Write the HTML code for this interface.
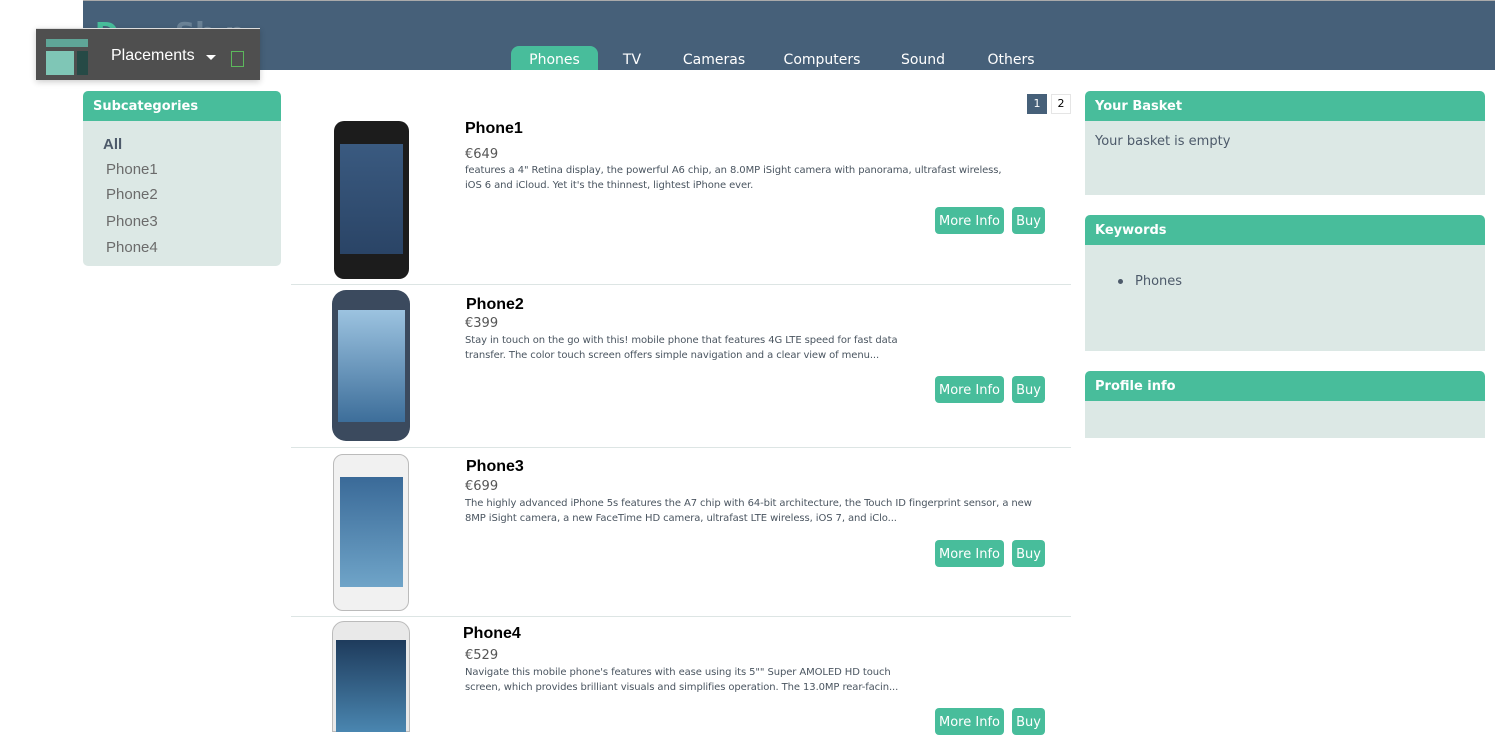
<!DOCTYPE html>
<html><head><meta charset="utf-8">
<style>
*{margin:0;padding:0;box-sizing:border-box}
body{width:1495px;height:732px;overflow:hidden;background:#fff;font-family:"DejaVu Sans","Liberation Sans",sans-serif;position:relative}
.a{position:absolute}
.hdr{left:83px;top:1px;width:1412px;height:69px;background:#466079}
.topline{left:83px;top:0;width:1412px;height:1px;background:#aaa}
.tab{top:46px;height:24px;color:#fff;font-size:14px;line-height:28px;text-align:center}
.tab.on{background:#48bd9b;border-radius:8px 8px 0 0}
.ph{background:#48bd9b;color:#fff;font-weight:bold;font-size:13px;padding-left:10px;line-height:32px;border-radius:5px 5px 0 0}
.pb{background:#dce8e5}
.sub{font-family:"Liberation Sans",sans-serif;font-size:15px;color:#6b6b6b}
.title{font-family:"Liberation Sans",sans-serif;font-weight:bold;font-size:16px;color:#000}
.price{font-size:13px;color:#555}
.desc{font-size:10px;color:#4a5560;line-height:15px;letter-spacing:-0.1px}
.btn{background:#48bd9b;color:#fff;font-size:13px;text-align:center;line-height:29px;border-radius:4px;height:27px}
.sep{left:291px;width:780px;height:1px;background:#dde5e4}
</style></head><body>
<div class="a topline"></div>
<div class="a hdr"></div>
<div class="a" style="left:95px;top:16px;color:#48bd9b;font-size:28px;font-weight:bold">D</div>
<div class="a" style="left:175px;top:16px;color:#6a8296;font-size:28px;font-weight:bold">Sh p</div>
<div class="a tab on" style="left:511px;width:87px">Phones</div>
<div class="a tab" style="left:612px;width:40px">TV</div>
<div class="a tab" style="left:675px;width:78px">Cameras</div>
<div class="a tab" style="left:778px;width:88px">Computers</div>
<div class="a tab" style="left:893px;width:60px">Sound</div>
<div class="a tab" style="left:980px;width:62px">Others</div>

<div class="a" style="left:36px;top:28px;width:224px;height:52px;background:#4f4f4f;border-top:1px solid #ddd;box-shadow:0 2px 6px rgba(0,0,0,.2)"></div>
<div class="a" style="left:46px;top:39px;width:42px;height:8px;background:#5fa597"></div>
<div class="a" style="left:46px;top:51px;width:28px;height:24px;background:#7fc6b6"></div>
<div class="a" style="left:77px;top:51px;width:11px;height:24px;background:#264a46"></div>
<div class="a" style="left:111px;top:47px;color:#fff;font-family:'Liberation Sans',sans-serif;font-size:16px">Placements</div>
<div class="a" style="left:206px;top:55px;width:0;height:0;border-left:5px solid transparent;border-right:5px solid transparent;border-top:5px solid #fff"></div>
<div class="a" style="left:231px;top:51px;width:13px;height:16px;border:1px solid #5cb85c"></div>

<div class="a ph" style="left:83px;top:91px;width:198px;height:30px">Subcategories</div>
<div class="a pb" style="left:83px;top:121px;width:198px;height:145px;border-radius:0 0 5px 5px"></div>
<div class="a sub" style="left:103px;top:136px;font-weight:bold;color:#4d5a6a">All</div>
<div class="a sub" style="left:106px;top:161px">Phone1</div>
<div class="a sub" style="left:106px;top:186px">Phone2</div>
<div class="a sub" style="left:106px;top:213px">Phone3</div>
<div class="a sub" style="left:106px;top:239px">Phone4</div>

<div class="a" style="left:1027px;top:94px;width:20px;height:20px;background:#466079;color:#fff;font-size:11px;text-align:center;line-height:20px">1</div>
<div class="a" style="left:1051px;top:94px;width:20px;height:20px;border:1px solid #e5e5e5;color:#000;font-size:11px;text-align:center;line-height:18px">2</div>

<div class="a" style="left:334px;top:121px;width:75px;height:158px;background:#1c1c1c;border-radius:10px"></div>
<div class="a" style="left:340px;top:144px;width:63px;height:110px;background:linear-gradient(#3a5a80,#2a4466)"></div>
<div class="a" style="left:332px;top:290px;width:78px;height:151px;background:#3b4a5e;border-radius:14px"></div>
<div class="a" style="left:338px;top:310px;width:67px;height:112px;background:linear-gradient(#9cc3e0,#3d6e9a)"></div>
<div class="a" style="left:333px;top:454px;width:76px;height:157px;background:#f1f1f1;border:1px solid #bbb;border-radius:10px"></div>
<div class="a" style="left:340px;top:477px;width:63px;height:110px;background:linear-gradient(#3a6a98,#6fa4c8)"></div>
<div class="a" style="left:332px;top:621px;width:78px;height:111px;background:#e9e9e9;border:1px solid #bbb;border-radius:12px 12px 0 0"></div>
<div class="a" style="left:336px;top:640px;width:70px;height:92px;background:linear-gradient(#1e3b5c,#4a86b0)"></div>

<div class="a title" style="left:465px;top:120px">Phone1</div>
<div class="a price" style="left:465px;top:147px">€649</div>
<div class="a desc" style="left:465px;top:163px;width:580px">features a 4" Retina display, the powerful A6 chip, an 8.0MP iSight camera with panorama, ultrafast wireless,<br>iOS 6 and iCloud. Yet it's the thinnest, lightest iPhone ever.</div>
<div class="a btn" style="left:935px;top:207px;width:69px">More Info</div>
<div class="a btn" style="left:1012px;top:207px;width:33px">Buy</div>
<div class="a sep" style="top:284px"></div>

<div class="a title" style="left:466px;top:296px">Phone2</div>
<div class="a price" style="left:465px;top:316px">€399</div>
<div class="a desc" style="left:465px;top:333px;width:560px">Stay in touch on the go with this! mobile phone that features 4G LTE speed for fast data<br>transfer. The color touch screen offers simple navigation and a clear view of menu...</div>
<div class="a btn" style="left:935px;top:376px;width:69px">More Info</div>
<div class="a btn" style="left:1012px;top:376px;width:33px">Buy</div>
<div class="a sep" style="top:447px"></div>

<div class="a title" style="left:466px;top:458px">Phone3</div>
<div class="a price" style="left:465px;top:479px">€699</div>
<div class="a desc" style="left:465px;top:496px;width:600px">The highly advanced iPhone 5s features the A7 chip with 64-bit architecture, the Touch ID fingerprint sensor, a new<br>8MP iSight camera, a new FaceTime HD camera, ultrafast LTE wireless, iOS 7, and iClo...</div>
<div class="a btn" style="left:935px;top:540px;width:69px">More Info</div>
<div class="a btn" style="left:1012px;top:540px;width:33px">Buy</div>
<div class="a sep" style="top:616px"></div>

<div class="a title" style="left:463px;top:625px">Phone4</div>
<div class="a price" style="left:465px;top:648px">€529</div>
<div class="a desc" style="left:465px;top:665px;width:560px">Navigate this mobile phone's features with ease using its 5"" Super AMOLED HD touch<br>screen, which provides brilliant visuals and simplifies operation. The 13.0MP rear-facin...</div>
<div class="a btn" style="left:935px;top:708px;width:69px">More Info</div>
<div class="a btn" style="left:1012px;top:708px;width:33px">Buy</div>

<div class="a ph" style="left:1085px;top:91px;width:400px;height:30px">Your Basket</div>
<div class="a pb" style="left:1085px;top:121px;width:400px;height:74px"></div>
<div class="a" style="left:1095px;top:134px;font-size:13px;color:#4d5a6a">Your basket is empty</div>
<div class="a ph" style="left:1085px;top:215px;width:400px;height:30px">Keywords</div>
<div class="a pb" style="left:1085px;top:245px;width:400px;height:106px"></div>
<div class="a" style="left:1118px;top:279px;width:5px;height:5px;border-radius:50%;background:#4d5a6a"></div>
<div class="a" style="left:1135px;top:274px;font-size:13px;color:#4d5a6a">Phones</div>
<div class="a ph" style="left:1085px;top:371px;width:400px;height:30px">Profile info</div>
<div class="a pb" style="left:1085px;top:401px;width:400px;height:37px"></div>
</body></html>
